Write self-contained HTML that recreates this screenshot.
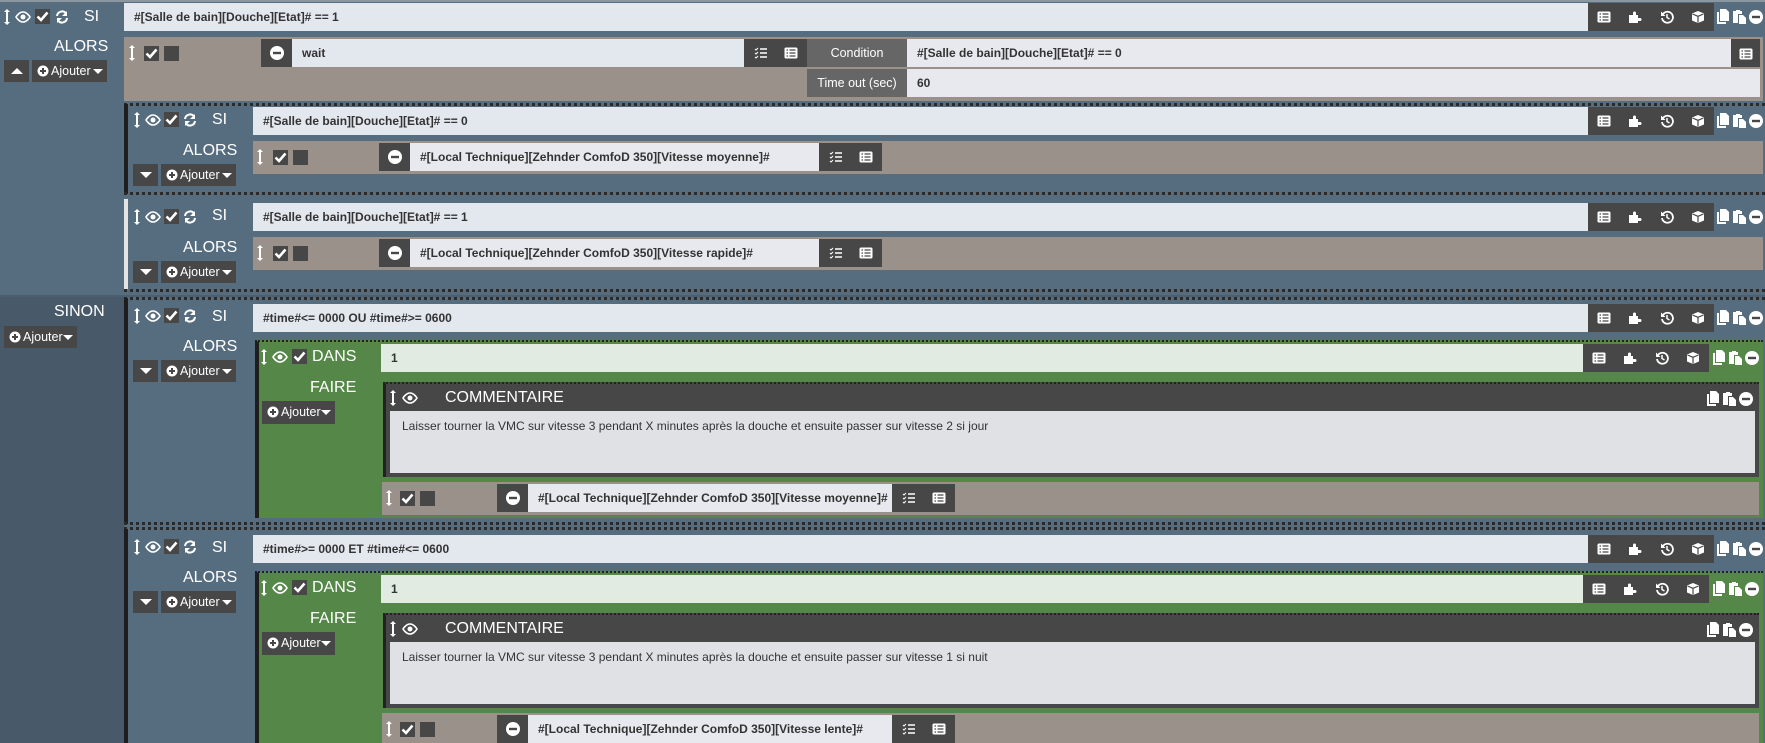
<!DOCTYPE html>
<html><head><meta charset="utf-8"><style>
*{margin:0;padding:0;box-sizing:border-box}
body{width:1765px;height:743px;overflow:hidden;background:#566d80;position:relative;font-family:"Liberation Sans",sans-serif}
div,span,svg{position:absolute}
.in{background:#e3e7ee;color:#333;font-weight:bold;font-size:12px;padding-left:10px;white-space:nowrap;overflow:hidden}
.dk{background:#474747}
.br{background:#9a918b}
.lb{color:#fff;font-size:16px}
.btn{background:#474747;color:#fff;font-size:12.5px;line-height:22px;white-space:nowrap}
.cb{width:15px;height:15px;background:#474747}
.dot{border-top:3px dotted #2a2a2a}
.ic{fill:#fff}
</style></head><body>
<svg width="0" height="0" style="position:absolute">
<defs>
<symbol id="arr" viewBox="0 0 6 16"><path d="M3 0 L6 3 H4 V13 H6 L3 16 L0 13 H2 V3 H0Z" fill="#fff"/></symbol>
<symbol id="eye" viewBox="0 0 16 12"><path d="M8 1C4 1 1 6 1 6s3 5 7 5 7-5 7-5-3-5-7-5z" fill="none" stroke="#fff" stroke-width="1.6"/><circle cx="8" cy="6" r="2.5" fill="#fff"/></symbol>
<symbol id="chk" viewBox="0 0 15 15"><rect width="15" height="15" fill="#474747"/><path d="M2.5 7.5 L6 11 L12.5 3.5" fill="none" stroke="#fff" stroke-width="2.6"/></symbol>
<symbol id="ref" viewBox="0 0 14 14"><path d="M2 6A5 5 0 0 1 11 3.5M12 8A5 5 0 0 1 3 10.5" fill="none" stroke="#fff" stroke-width="2"/><path d="M12 1V6H7Z M2 13V8H7Z" fill="#fff"/></symbol>
<symbol id="lst" viewBox="0 0 14 12"><rect x="0.5" y="0.5" width="13" height="11" rx="1.5" fill="#fff"/><path d="M2.5 3H4M2.5 6H4M2.5 9H4M5.5 3H11.5M5.5 6H11.5M5.5 9H11.5" stroke="#474747" stroke-width="1.3"/></symbol>
<symbol id="pzl" viewBox="0 0 14 14"><path d="M1 5H5V3A1.5 1.5 0 0 1 8 3V5H10V8H12A1.5 1.5 0 0 1 12 11H10V13H1Z" fill="#fff"/></symbol>
<symbol id="his" viewBox="0 0 14 14"><path d="M3 4A5.5 5.5 0 1 1 2 8" fill="none" stroke="#fff" stroke-width="1.8"/><path d="M1 1.5V6H5.5Z" fill="#fff"/><path d="M7 4V7.5L9.5 9" fill="none" stroke="#fff" stroke-width="1.5"/></symbol>
<symbol id="cub" viewBox="0 0 14 14"><path d="M7 1L13 3.5V10.5L7 13L1 10.5V3.5Z" fill="#fff"/><path d="M1.5 4L7 6.3L12.5 4M7 6.3V12.5" fill="none" stroke="#474747" stroke-width="1.2"/></symbol>
<symbol id="cpy" viewBox="0 0 13 15"><path d="M0 3H2V13H9V15H0Z M3 0H9L12 3V12H3Z" fill="#fff"/></symbol>
<symbol id="pst" viewBox="0 0 13 15"><path d="M0 2H3V1H7V2H9V5H5V14H0Z" fill="#fff"/><path d="M6 6H10L13 9V15H6Z" fill="#fff"/></symbol>
<symbol id="min" viewBox="0 0 14 14"><circle cx="7" cy="7" r="7" fill="#fff"/><rect x="3" y="5.8" width="8" height="2.4" fill="#474747"/></symbol>
<symbol id="tsk" viewBox="0 0 14 12"><path d="M1 2L2 3L4 1M1 6L2 7L4 5M1 10L2 11L4 9" fill="none" stroke="#fff" stroke-width="1"/><path d="M6 2H13M6 6H13M6 10H13" stroke="#fff" stroke-width="1.6"/></symbol>
<symbol id="plc" viewBox="0 0 12 12"><circle cx="6" cy="6" r="5.5" fill="#fff"/><path d="M6 3V9M3 6H9" stroke="#474747" stroke-width="2"/></symbol>
</defs></svg>

<!-- left dark column below SINON -->
<div style="left:0;top:296px;width:124px;height:447px;background:#48596a"></div>
<div style="left:0;top:0;width:1765px;height:2px;background:#8a96a0"></div>

<!-- TOP SI row -->
<svg style="left:4px;top:9px" width="6" height="16"><use href="#arr"/></svg>
<svg style="left:15px;top:11px" width="16" height="12"><use href="#eye"/></svg>
<svg style="left:35px;top:9px" width="15" height="15"><use href="#chk"/></svg>
<svg style="left:55px;top:10px" width="14" height="14"><use href="#ref"/></svg>
<div class="lb" style="left:84px;top:8px">SI</div>
<div class="in" style="left:124px;top:3px;width:1464px;height:28px;line-height:28px">#[Salle de bain][Douche][Etat]# == 1</div>
<div class="dk" style="left:1588px;top:3px;width:126px;height:28px"></div>
<svg style="left:1597px;top:11px" width="14" height="12"><use href="#lst"/></svg>
<svg style="left:1628px;top:10px" width="14" height="14"><use href="#pzl"/></svg>
<svg style="left:1660px;top:10px" width="14" height="14"><use href="#his"/></svg>
<svg style="left:1691px;top:10px" width="14" height="14"><use href="#cub"/></svg>
<svg style="left:1717px;top:9px" width="13" height="15"><use href="#cpy"/></svg>
<svg style="left:1733px;top:9px" width="13" height="15"><use href="#pst"/></svg>
<svg style="left:1749px;top:10px" width="14" height="14"><use href="#min"/></svg>

<div class="lb" style="left:54px;top:38px">ALORS</div>
<div class="btn" style="left:4px;top:60px;width:25px;height:22px"><span style="left:7px;top:8px;border-left:6px solid transparent;border-right:6px solid transparent;border-bottom:6px solid #fff"></span></div>
<div class="btn" style="left:32px;top:60px;width:75px;height:22px"><svg style="left:5px;top:5px" width="12" height="12"><use href="#plc"/></svg><span style="left:19px;top:0">Ajouter</span><span style="left:61px;top:9px;border-left:5px solid transparent;border-right:5px solid transparent;border-top:5px solid #fff"></span></div>

<!-- wait row -->
<div class="br" style="left:124px;top:37px;width:1639px;height:64px"></div>
<svg style="left:129px;top:45px" width="6" height="16"><use href="#arr"/></svg>
<svg style="left:144px;top:46px" width="15" height="15"><use href="#chk"/></svg>
<div class="cb" style="left:164px;top:46px"></div>
<div class="dk" style="left:261px;top:39px;width:31px;height:28px"><svg style="left:9px;top:7px" width="14" height="14"><use href="#min"/></svg></div>
<div class="in" style="left:292px;top:39px;width:452px;height:28px;line-height:28px">wait</div>
<div class="dk" style="left:744px;top:39px;width:63px;height:28px"><svg style="left:10px;top:8px" width="14" height="12"><use href="#tsk"/></svg><svg style="left:40px;top:8px" width="14" height="12"><use href="#lst"/></svg></div>
<div style="left:807px;top:39px;width:100px;height:28px;background:#666;color:#fff;font-size:12.5px;line-height:28px;text-align:center">Condition</div>
<div class="in" style="left:907px;top:39px;width:824px;height:28px;line-height:28px;background:#e8e9ee">#[Salle de bain][Douche][Etat]# == 0</div>
<div class="dk" style="left:1731px;top:39px;width:29px;height:28px"><svg style="left:8px;top:9px" width="14" height="12"><use href="#lst"/></svg></div>
<div style="left:807px;top:69px;width:100px;height:28px;background:#666;color:#fff;font-size:12.5px;line-height:28px;text-align:center">Time out (sec)</div>
<div class="in" style="left:907px;top:69px;width:853px;height:28px;line-height:28px;background:#e8e9ee">60</div>

<!-- Block 1 -->
<div class="dot" style="left:124px;top:103px;width:1641px"></div>
<div style="left:124px;top:104px;width:4px;height:90px;background:#1e1e1e"></div>
<div class="dot" style="left:124px;top:192px;width:1641px"></div>
<svg style="left:134px;top:112px" width="6" height="16"><use href="#arr"/></svg>
<svg style="left:145px;top:114px" width="16" height="12"><use href="#eye"/></svg>
<svg style="left:164px;top:112px" width="15" height="15"><use href="#chk"/></svg>
<svg style="left:183px;top:113px" width="14" height="14"><use href="#ref"/></svg>
<div class="lb" style="left:212px;top:111px">SI</div>
<div class="in" style="left:253px;top:107px;width:1335px;height:28px;line-height:28px">#[Salle de bain][Douche][Etat]# == 0</div>
<div class="dk" style="left:1588px;top:107px;width:126px;height:28px"></div>
<svg style="left:1597px;top:115px" width="14" height="12"><use href="#lst"/></svg>
<svg style="left:1628px;top:114px" width="14" height="14"><use href="#pzl"/></svg>
<svg style="left:1660px;top:114px" width="14" height="14"><use href="#his"/></svg>
<svg style="left:1691px;top:114px" width="14" height="14"><use href="#cub"/></svg>
<svg style="left:1717px;top:113px" width="13" height="15"><use href="#cpy"/></svg>
<svg style="left:1733px;top:113px" width="13" height="15"><use href="#pst"/></svg>
<svg style="left:1749px;top:114px" width="14" height="14"><use href="#min"/></svg>
<div class="lb" style="left:183px;top:142px">ALORS</div>
<div class="btn" style="left:133px;top:164px;width:25px;height:22px"><span style="left:7px;top:8px;border-left:6px solid transparent;border-right:6px solid transparent;border-top:6px solid #fff"></span></div>
<div class="btn" style="left:161px;top:164px;width:75px;height:22px"><svg style="left:5px;top:5px" width="12" height="12"><use href="#plc"/></svg><span style="left:19px;top:0">Ajouter</span><span style="left:61px;top:9px;border-left:5px solid transparent;border-right:5px solid transparent;border-top:5px solid #fff"></span></div>
<div class="br" style="left:253px;top:141px;width:1510px;height:33px"></div>
<svg style="left:257px;top:149px" width="6" height="16"><use href="#arr"/></svg>
<svg style="left:273px;top:150px" width="15" height="15"><use href="#chk"/></svg>
<div class="cb" style="left:293px;top:150px"></div>
<div class="dk" style="left:379px;top:143px;width:31px;height:28px"><svg style="left:9px;top:7px" width="14" height="14"><use href="#min"/></svg></div>
<div class="in" style="left:410px;top:143px;width:409px;height:28px;line-height:28px;background:#e8e9ee">#[Local Technique][Zehnder ComfoD 350][Vitesse moyenne]#</div>
<div class="dk" style="left:819px;top:143px;width:63px;height:28px"><svg style="left:10px;top:8px" width="14" height="12"><use href="#tsk"/></svg><svg style="left:40px;top:8px" width="14" height="12"><use href="#lst"/></svg></div>

<!-- Block 2 -->
<div style="left:124px;top:199px;width:4px;height:90px;background:#e4e4e4"></div>
<div class="dot" style="left:124px;top:289px;width:1641px"></div>
<svg style="left:134px;top:209px" width="6" height="16"><use href="#arr"/></svg>
<svg style="left:145px;top:211px" width="16" height="12"><use href="#eye"/></svg>
<svg style="left:164px;top:209px" width="15" height="15"><use href="#chk"/></svg>
<svg style="left:183px;top:210px" width="14" height="14"><use href="#ref"/></svg>
<div class="lb" style="left:212px;top:207px">SI</div>
<div class="in" style="left:253px;top:203px;width:1335px;height:28px;line-height:28px">#[Salle de bain][Douche][Etat]# == 1</div>
<div class="dk" style="left:1588px;top:203px;width:126px;height:28px"></div>
<svg style="left:1597px;top:211px" width="14" height="12"><use href="#lst"/></svg>
<svg style="left:1628px;top:210px" width="14" height="14"><use href="#pzl"/></svg>
<svg style="left:1660px;top:210px" width="14" height="14"><use href="#his"/></svg>
<svg style="left:1691px;top:210px" width="14" height="14"><use href="#cub"/></svg>
<svg style="left:1717px;top:209px" width="13" height="15"><use href="#cpy"/></svg>
<svg style="left:1733px;top:209px" width="13" height="15"><use href="#pst"/></svg>
<svg style="left:1749px;top:210px" width="14" height="14"><use href="#min"/></svg>
<div class="lb" style="left:183px;top:239px">ALORS</div>
<div class="btn" style="left:133px;top:261px;width:25px;height:22px"><span style="left:7px;top:8px;border-left:6px solid transparent;border-right:6px solid transparent;border-top:6px solid #fff"></span></div>
<div class="btn" style="left:161px;top:261px;width:75px;height:22px"><svg style="left:5px;top:5px" width="12" height="12"><use href="#plc"/></svg><span style="left:19px;top:0">Ajouter</span><span style="left:61px;top:9px;border-left:5px solid transparent;border-right:5px solid transparent;border-top:5px solid #fff"></span></div>
<div class="br" style="left:253px;top:237px;width:1510px;height:33px"></div>
<svg style="left:257px;top:245px" width="6" height="16"><use href="#arr"/></svg>
<svg style="left:273px;top:246px" width="15" height="15"><use href="#chk"/></svg>
<div class="cb" style="left:293px;top:246px"></div>
<div class="dk" style="left:379px;top:239px;width:31px;height:28px"><svg style="left:9px;top:7px" width="14" height="14"><use href="#min"/></svg></div>
<div class="in" style="left:410px;top:239px;width:409px;height:28px;line-height:28px;background:#e8e9ee">#[Local Technique][Zehnder ComfoD 350][Vitesse rapide]#</div>
<div class="dk" style="left:819px;top:239px;width:63px;height:28px"><svg style="left:10px;top:8px" width="14" height="12"><use href="#tsk"/></svg><svg style="left:40px;top:8px" width="14" height="12"><use href="#lst"/></svg></div>

<!-- SINON -->
<div style="left:0;top:295px;width:1765px;height:2px;background:#4b5f70"></div>
<div class="lb" style="left:54px;top:303px">SINON</div>
<div class="btn" style="left:4px;top:326px;width:73px;height:22px"><svg style="left:5px;top:5px" width="12" height="12"><use href="#plc"/></svg><span style="left:19px;top:0">Ajouter</span><span style="left:59px;top:9px;border-left:5px solid transparent;border-right:5px solid transparent;border-top:5px solid #fff"></span></div>

<!-- Block 3 -->
<div class="dot" style="left:124px;top:297px;width:1641px"></div>
<div style="left:124px;top:298px;width:4px;height:226px;background:#1e1e1e"></div>
<div class="dot" style="left:124px;top:522px;width:1641px"></div>
<svg style="left:134px;top:308px" width="6" height="16"><use href="#arr"/></svg>
<svg style="left:145px;top:310px" width="16" height="12"><use href="#eye"/></svg>
<svg style="left:164px;top:308px" width="15" height="15"><use href="#chk"/></svg>
<svg style="left:183px;top:309px" width="14" height="14"><use href="#ref"/></svg>
<div class="lb" style="left:212px;top:308px">SI</div>
<div class="in" style="left:253px;top:304px;width:1335px;height:28px;line-height:28px">#time#&lt;= 0000 OU #time#&gt;= 0600</div>
<div class="dk" style="left:1588px;top:304px;width:126px;height:28px"></div>
<svg style="left:1597px;top:312px" width="14" height="12"><use href="#lst"/></svg>
<svg style="left:1628px;top:311px" width="14" height="14"><use href="#pzl"/></svg>
<svg style="left:1660px;top:311px" width="14" height="14"><use href="#his"/></svg>
<svg style="left:1691px;top:311px" width="14" height="14"><use href="#cub"/></svg>
<svg style="left:1717px;top:310px" width="13" height="15"><use href="#cpy"/></svg>
<svg style="left:1733px;top:310px" width="13" height="15"><use href="#pst"/></svg>
<svg style="left:1749px;top:311px" width="14" height="14"><use href="#min"/></svg>
<div class="lb" style="left:183px;top:338px">ALORS</div>
<div class="btn" style="left:133px;top:360px;width:25px;height:22px"><span style="left:7px;top:8px;border-left:6px solid transparent;border-right:6px solid transparent;border-top:6px solid #fff"></span></div>
<div class="btn" style="left:161px;top:360px;width:75px;height:22px"><svg style="left:5px;top:5px" width="12" height="12"><use href="#plc"/></svg><span style="left:19px;top:0">Ajouter</span><span style="left:61px;top:9px;border-left:5px solid transparent;border-right:5px solid transparent;border-top:5px solid #fff"></span></div>
<!-- DANS green -->
<div style="left:255px;top:340px;width:1508px;height:178px;background:#558848;border-left:4px solid #1e1e1e;border-top:2px dotted #222"></div>
<svg style="left:261px;top:349px" width="6" height="16"><use href="#arr"/></svg>
<svg style="left:272px;top:351px" width="16" height="12"><use href="#eye"/></svg>
<svg style="left:292px;top:349px" width="15" height="15"><use href="#chk"/></svg>
<div class="lb" style="left:312px;top:348px">DANS</div>
<div class="in" style="left:381px;top:344px;width:1202px;height:28px;line-height:28px;background:#e2ebe2">1</div>
<div class="dk" style="left:1583px;top:344px;width:126px;height:28px"></div>
<svg style="left:1592px;top:352px" width="14" height="12"><use href="#lst"/></svg>
<svg style="left:1623px;top:351px" width="14" height="14"><use href="#pzl"/></svg>
<svg style="left:1655px;top:351px" width="14" height="14"><use href="#his"/></svg>
<svg style="left:1686px;top:351px" width="14" height="14"><use href="#cub"/></svg>
<svg style="left:1713px;top:350px" width="13" height="15"><use href="#cpy"/></svg>
<svg style="left:1729px;top:350px" width="13" height="15"><use href="#pst"/></svg>
<svg style="left:1745px;top:351px" width="14" height="14"><use href="#min"/></svg>
<div class="lb" style="left:310px;top:379px">FAIRE</div>
<div class="btn" style="left:262px;top:401px;width:73px;height:23px"><svg style="left:5px;top:5px" width="12" height="12"><use href="#plc"/></svg><span style="left:19px;top:0">Ajouter</span><span style="left:59px;top:9px;border-left:5px solid transparent;border-right:5px solid transparent;border-top:5px solid #fff"></span></div>
<div style="left:383px;top:382px;width:1376px;height:95px;background:#474747;border-top:2px dotted #222;border-left:3px solid #222"></div>
<svg style="left:390px;top:390px" width="6" height="16"><use href="#arr"/></svg>
<svg style="left:402px;top:392px" width="16" height="12"><use href="#eye"/></svg>
<div class="lb" style="left:445px;top:389px">COMMENTAIRE</div>
<svg style="left:1707px;top:391px" width="13" height="15"><use href="#cpy"/></svg>
<svg style="left:1723px;top:391px" width="13" height="15"><use href="#pst"/></svg>
<svg style="left:1739px;top:392px" width="14" height="14"><use href="#min"/></svg>
<div style="left:390px;top:411px;width:1365px;height:62px;background:#e0e1e5;color:#333;font-size:12px;padding:8px 12px">Laisser tourner la VMC sur vitesse 3 pendant X minutes après la douche et ensuite passer sur vitesse 2 si jour</div>
<div class="br" style="left:382px;top:482px;width:1377px;height:33px"></div>
<svg style="left:386px;top:490px" width="6" height="16"><use href="#arr"/></svg>
<svg style="left:400px;top:491px" width="15" height="15"><use href="#chk"/></svg>
<div class="cb" style="left:420px;top:491px"></div>
<div class="dk" style="left:497px;top:484px;width:31px;height:28px"><svg style="left:9px;top:7px" width="14" height="14"><use href="#min"/></svg></div>
<div class="in" style="left:528px;top:484px;width:364px;height:28px;line-height:28px;background:#e8e9ee">#[Local Technique][Zehnder ComfoD 350][Vitesse moyenne]#</div>
<div class="dk" style="left:892px;top:484px;width:63px;height:28px"><svg style="left:10px;top:8px" width="14" height="12"><use href="#tsk"/></svg><svg style="left:40px;top:8px" width="14" height="12"><use href="#lst"/></svg></div>

<!-- Block 4 -->
<div class="dot" style="left:124px;top:527px;width:1641px"></div>
<div style="left:124px;top:529px;width:4px;height:214px;background:#1e1e1e"></div>
<svg style="left:134px;top:539px" width="6" height="16"><use href="#arr"/></svg>
<svg style="left:145px;top:541px" width="16" height="12"><use href="#eye"/></svg>
<svg style="left:164px;top:539px" width="15" height="15"><use href="#chk"/></svg>
<svg style="left:183px;top:540px" width="14" height="14"><use href="#ref"/></svg>
<div class="lb" style="left:212px;top:539px">SI</div>
<div class="in" style="left:253px;top:535px;width:1335px;height:28px;line-height:28px">#time#&gt;= 0000 ET #time#&lt;= 0600</div>
<div class="dk" style="left:1588px;top:535px;width:126px;height:28px"></div>
<svg style="left:1597px;top:543px" width="14" height="12"><use href="#lst"/></svg>
<svg style="left:1628px;top:542px" width="14" height="14"><use href="#pzl"/></svg>
<svg style="left:1660px;top:542px" width="14" height="14"><use href="#his"/></svg>
<svg style="left:1691px;top:542px" width="14" height="14"><use href="#cub"/></svg>
<svg style="left:1717px;top:541px" width="13" height="15"><use href="#cpy"/></svg>
<svg style="left:1733px;top:541px" width="13" height="15"><use href="#pst"/></svg>
<svg style="left:1749px;top:542px" width="14" height="14"><use href="#min"/></svg>
<div class="lb" style="left:183px;top:569px">ALORS</div>
<div class="btn" style="left:133px;top:591px;width:25px;height:22px"><span style="left:7px;top:8px;border-left:6px solid transparent;border-right:6px solid transparent;border-top:6px solid #fff"></span></div>
<div class="btn" style="left:161px;top:591px;width:75px;height:22px"><svg style="left:5px;top:5px" width="12" height="12"><use href="#plc"/></svg><span style="left:19px;top:0">Ajouter</span><span style="left:61px;top:9px;border-left:5px solid transparent;border-right:5px solid transparent;border-top:5px solid #fff"></span></div>
<div style="left:255px;top:571px;width:1508px;height:172px;background:#558848;border-left:4px solid #1e1e1e;border-top:2px dotted #222"></div>
<svg style="left:261px;top:580px" width="6" height="16"><use href="#arr"/></svg>
<svg style="left:272px;top:582px" width="16" height="12"><use href="#eye"/></svg>
<svg style="left:292px;top:580px" width="15" height="15"><use href="#chk"/></svg>
<div class="lb" style="left:312px;top:579px">DANS</div>
<div class="in" style="left:381px;top:575px;width:1202px;height:28px;line-height:28px;background:#e2ebe2">1</div>
<div class="dk" style="left:1583px;top:575px;width:126px;height:28px"></div>
<svg style="left:1592px;top:583px" width="14" height="12"><use href="#lst"/></svg>
<svg style="left:1623px;top:582px" width="14" height="14"><use href="#pzl"/></svg>
<svg style="left:1655px;top:582px" width="14" height="14"><use href="#his"/></svg>
<svg style="left:1686px;top:582px" width="14" height="14"><use href="#cub"/></svg>
<svg style="left:1713px;top:581px" width="13" height="15"><use href="#cpy"/></svg>
<svg style="left:1729px;top:581px" width="13" height="15"><use href="#pst"/></svg>
<svg style="left:1745px;top:582px" width="14" height="14"><use href="#min"/></svg>
<div class="lb" style="left:310px;top:610px">FAIRE</div>
<div class="btn" style="left:262px;top:632px;width:73px;height:23px"><svg style="left:5px;top:5px" width="12" height="12"><use href="#plc"/></svg><span style="left:19px;top:0">Ajouter</span><span style="left:59px;top:9px;border-left:5px solid transparent;border-right:5px solid transparent;border-top:5px solid #fff"></span></div>
<div style="left:383px;top:613px;width:1376px;height:95px;background:#474747;border-top:2px dotted #222;border-left:3px solid #222"></div>
<svg style="left:390px;top:621px" width="6" height="16"><use href="#arr"/></svg>
<svg style="left:402px;top:623px" width="16" height="12"><use href="#eye"/></svg>
<div class="lb" style="left:445px;top:620px">COMMENTAIRE</div>
<svg style="left:1707px;top:622px" width="13" height="15"><use href="#cpy"/></svg>
<svg style="left:1723px;top:622px" width="13" height="15"><use href="#pst"/></svg>
<svg style="left:1739px;top:623px" width="14" height="14"><use href="#min"/></svg>
<div style="left:390px;top:642px;width:1365px;height:62px;background:#e0e1e5;color:#333;font-size:12px;padding:8px 12px">Laisser tourner la VMC sur vitesse 3 pendant X minutes après la douche et ensuite passer sur vitesse 1 si nuit</div>
<div class="br" style="left:382px;top:713px;width:1377px;height:30px"></div>
<svg style="left:386px;top:721px" width="6" height="16"><use href="#arr"/></svg>
<svg style="left:400px;top:722px" width="15" height="15"><use href="#chk"/></svg>
<div class="cb" style="left:420px;top:722px"></div>
<div class="dk" style="left:497px;top:715px;width:31px;height:28px"><svg style="left:9px;top:7px" width="14" height="14"><use href="#min"/></svg></div>
<div class="in" style="left:528px;top:715px;width:364px;height:28px;line-height:28px;background:#e8e9ee">#[Local Technique][Zehnder ComfoD 350][Vitesse lente]#</div>
<div class="dk" style="left:892px;top:715px;width:63px;height:28px"><svg style="left:10px;top:8px" width="14" height="12"><use href="#tsk"/></svg><svg style="left:40px;top:8px" width="14" height="12"><use href="#lst"/></svg></div>
</body></html>
